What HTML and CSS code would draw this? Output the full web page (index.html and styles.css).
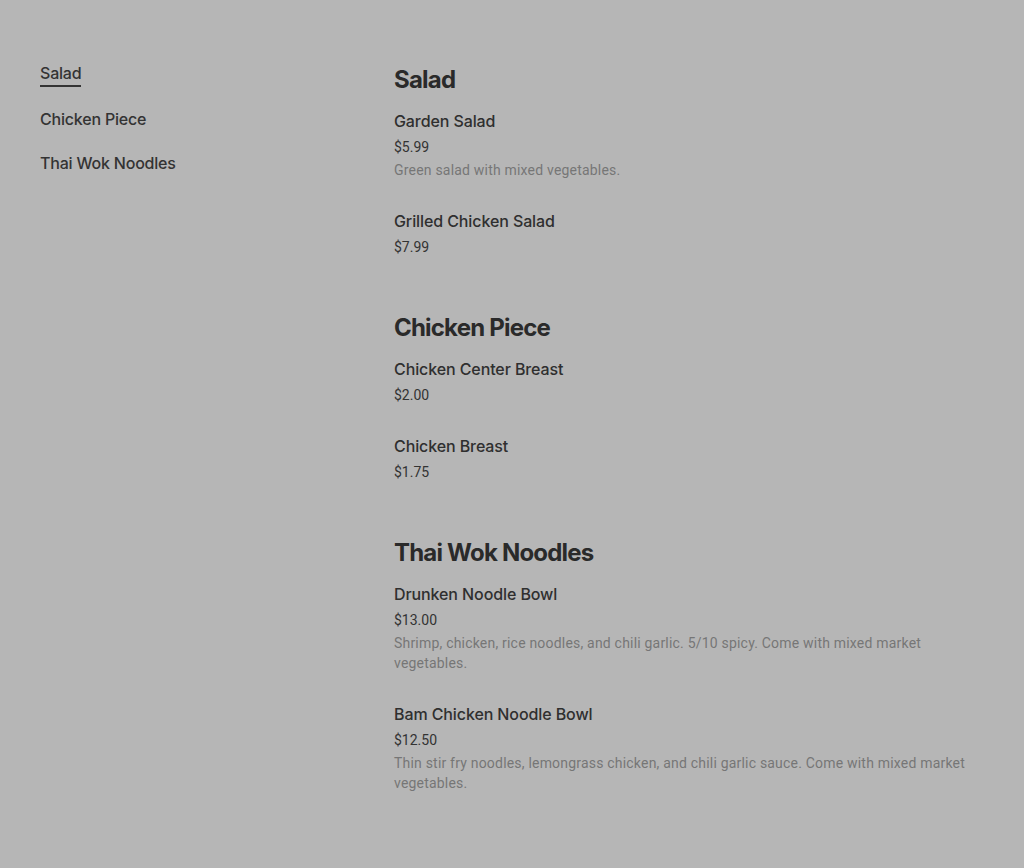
FILE: index.html
```html
<!DOCTYPE html>
<html>
<head>
<meta charset="utf-8">
<link rel="stylesheet" href="styles.css">
</head>
<body>
<div class="page">
  <nav class="nav">
    <a class="nav-item active">Salad</a>
    <a class="nav-item">Chicken Piece</a>
    <a class="nav-item">Thai Wok Noodles</a>
  </nav>
  <main class="menu">
    <section class="section">
      <h2 class="section-title">Salad</h2>
      <div class="items">
        <div class="item">
          <div class="item-name">Garden Salad</div>
          <div class="item-price">$5.99</div>
          <div class="item-desc">Green salad with mixed vegetables.</div>
        </div>
        <div class="item">
          <div class="item-name">Grilled Chicken Salad</div>
          <div class="item-price">$7.99</div>
        </div>
      </div>
    </section>
    <section class="section">
      <h2 class="section-title">Chicken Piece</h2>
      <div class="items">
        <div class="item">
          <div class="item-name">Chicken Center Breast</div>
          <div class="item-price">$2.00</div>
        </div>
        <div class="item">
          <div class="item-name">Chicken Breast</div>
          <div class="item-price">$1.75</div>
        </div>
      </div>
    </section>
    <section class="section">
      <h2 class="section-title">Thai Wok Noodles</h2>
      <div class="items">
        <div class="item">
          <div class="item-name">Drunken Noodle Bowl</div>
          <div class="item-price">$13.00</div>
          <div class="item-desc">Shrimp, chicken, rice noodles, and chili garlic. 5/10 spicy. Come with mixed market vegetables.</div>
        </div>
        <div class="item">
          <div class="item-name">Bam Chicken Noodle Bowl</div>
          <div class="item-price">$12.50</div>
          <div class="item-desc">Thin stir fry noodles, lemongrass chicken, and chili garlic sauce. Come with mixed market vegetables.</div>
        </div>
      </div>
    </section>
  </main>
</div>
</body>
</html>
```

FILE: styles.css
```css
* { box-sizing: border-box; }
html, body {
  margin: 0;
  padding: 0;
  background: #b6b6b6;
  font-family: Inter, "Noto Sans", sans-serif;
  color: #2f2f2f;
}
.page {
  display: grid;
  grid-template-columns: 3fr 5fr;
  padding: 61px 40px 40px;
}
.nav {
  display: flex;
  flex-direction: column;
  align-items: flex-start;
  gap: 20px;
}
.nav-item {
  font-size: 16px;
  line-height: 24px;
  font-weight: 500;
  letter-spacing: -0.2px;
  color: #333;
  cursor: pointer;
}
.nav-item.active {
  border-bottom: 2px solid #333;
}
.menu {
  display: flex;
  flex-direction: column;
  gap: 54px;
  padding-top: 2px;
}
.section-title {
  margin: 0 0 13px;
  padding-top: 1px;
  font-size: 24px;
  line-height: 32px;
  font-weight: 700;
  letter-spacing: -0.8px;
  color: #2a2a2a;
}
.items {
  display: flex;
  flex-direction: column;
  gap: 29px;
}
.item-name {
  font-size: 16px;
  line-height: 24px;
  font-weight: 500;
  letter-spacing: -0.1px;
  color: #2f2f2f;
}
.item-price {
  margin-top: 4px;
  font-family: Roboto, "Noto Sans", sans-serif;
  font-size: 14px;
  line-height: 20px;
  color: #333;
}
.item-desc {
  margin-top: 3px;
  font-family: Roboto, "Noto Sans", sans-serif;
  font-size: 14px;
  line-height: 20px;
  letter-spacing: 0.2px;
  color: #767676;
}
```
